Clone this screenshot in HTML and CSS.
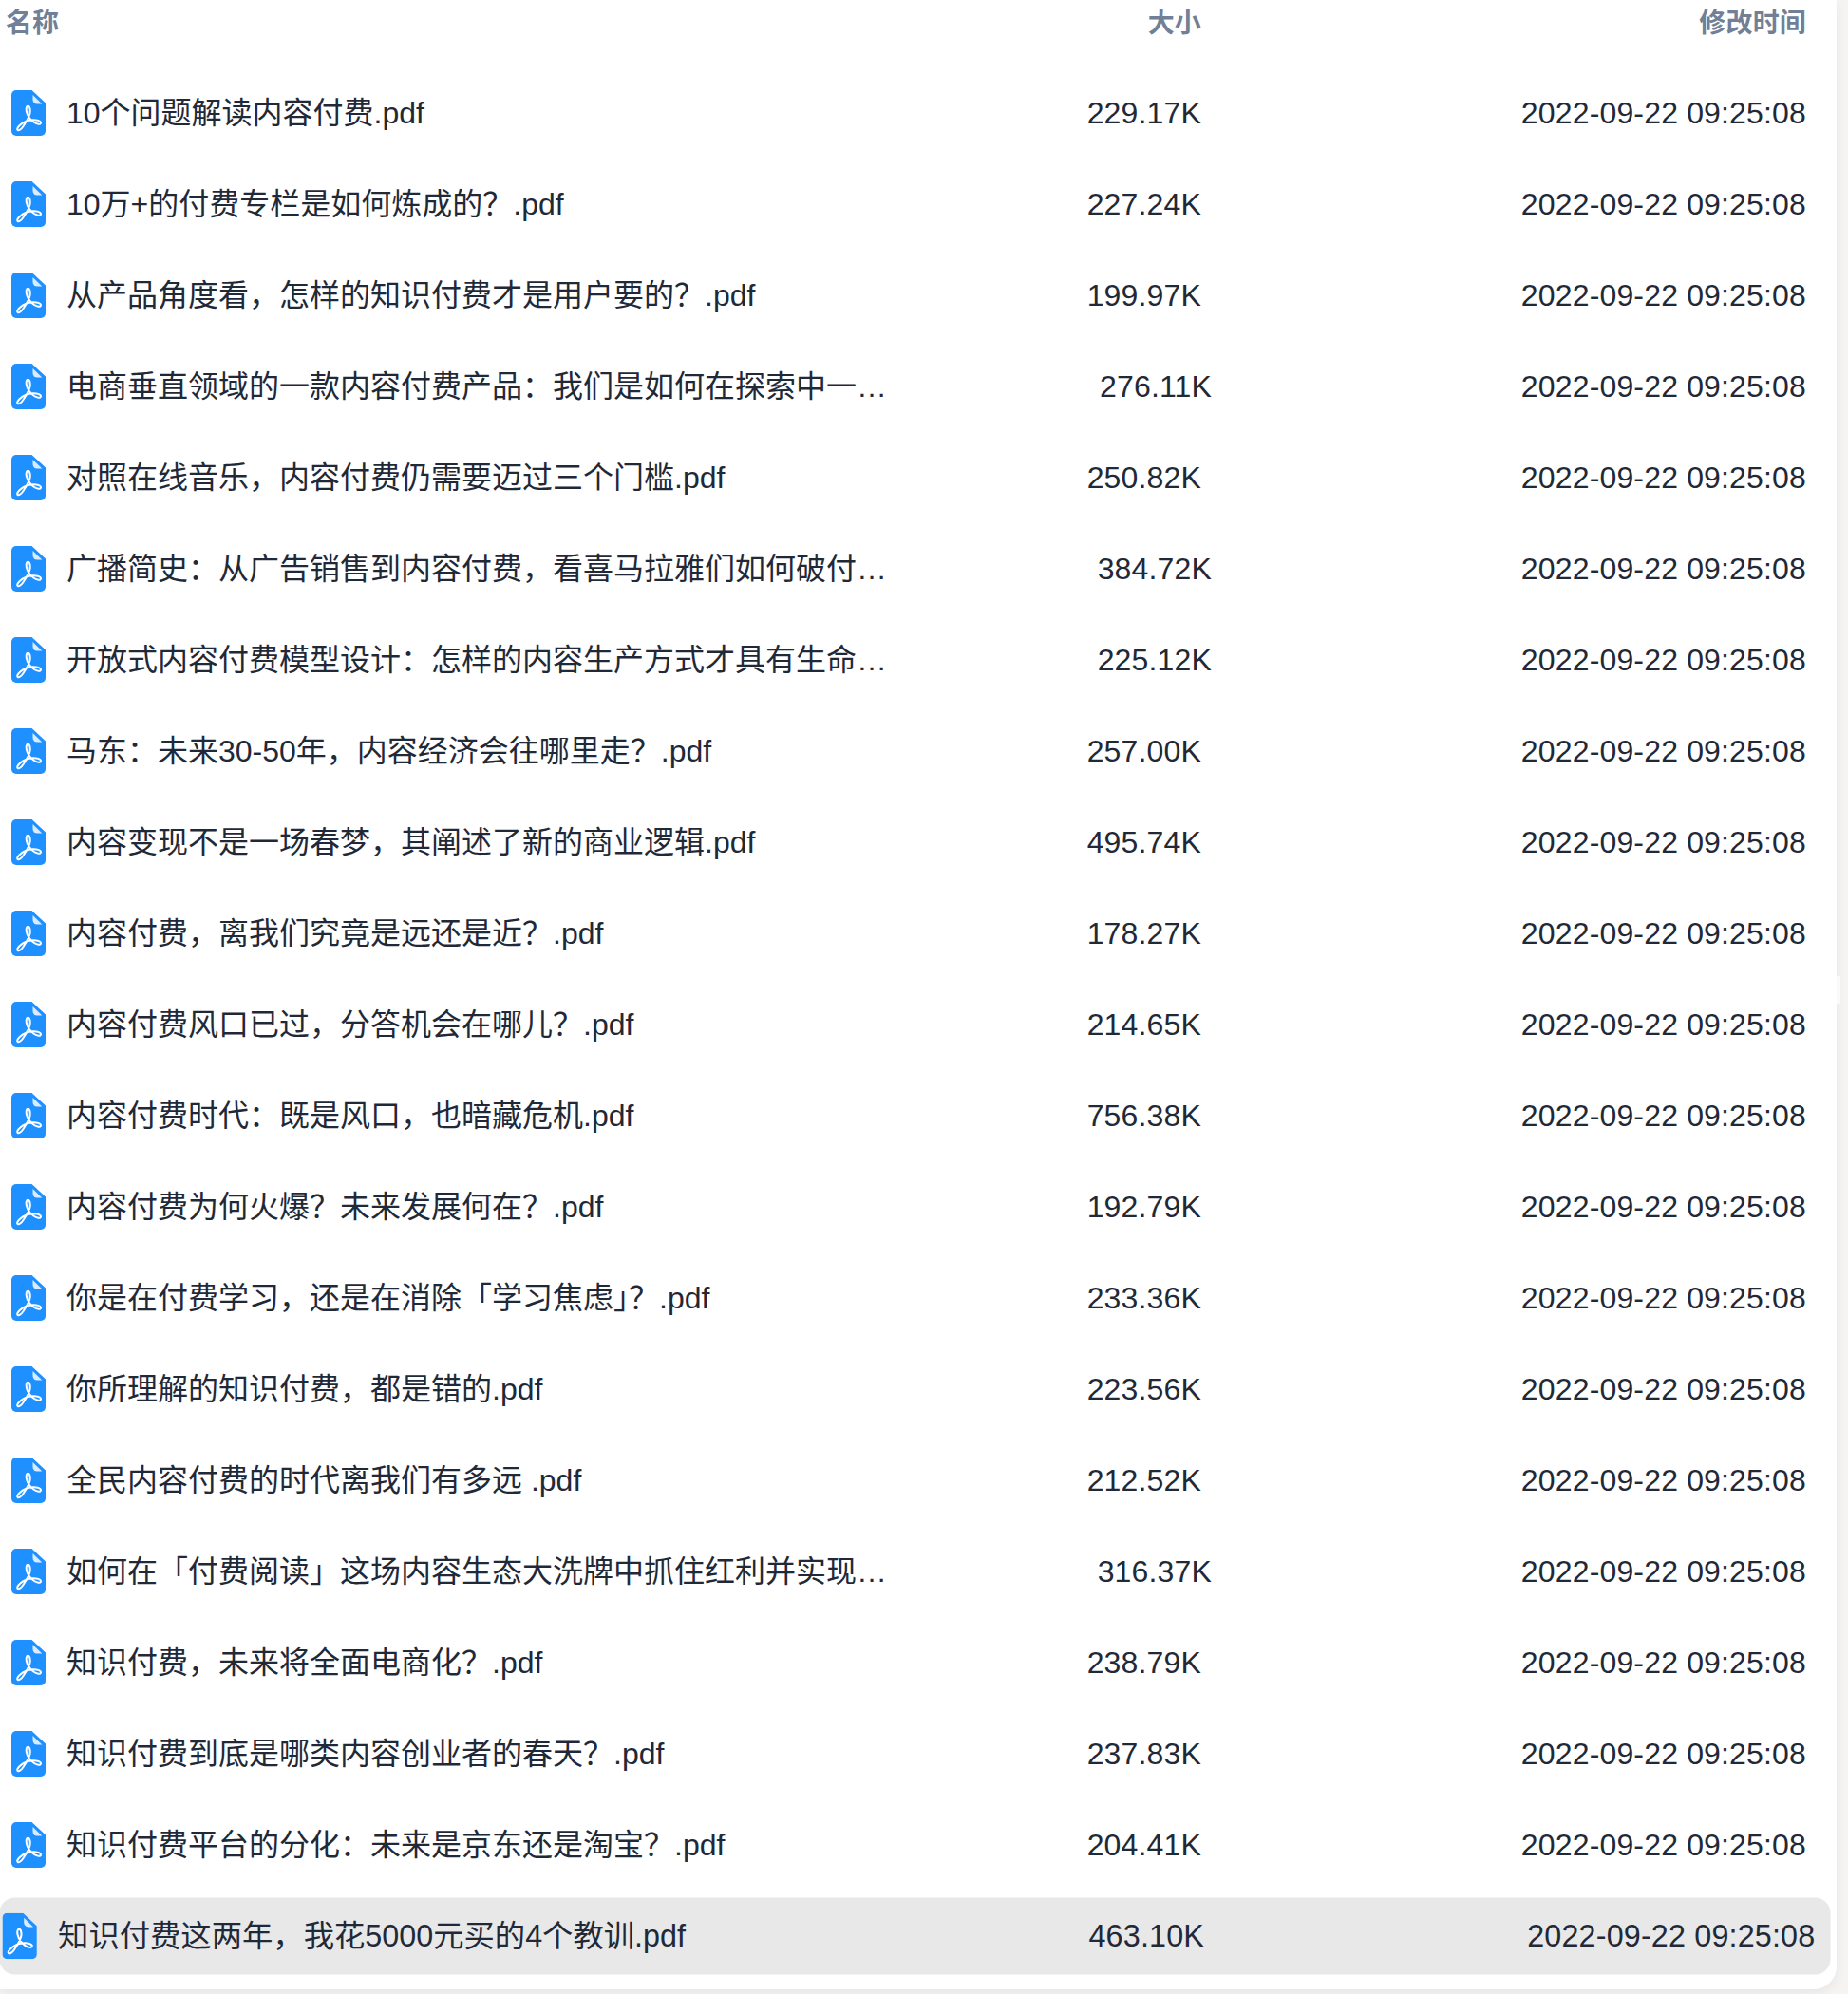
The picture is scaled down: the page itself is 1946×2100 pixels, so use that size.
FILE: index.html
```html
<!DOCTYPE html>
<html lang="zh-CN">
  <head>
    <meta charset="utf-8" />

    <title>文件列表</title>

    <link rel="stylesheet" href="styles.css">
  </head>

  <body>
    <svg class="sprites" width="0" height="0">
      <symbol id="icon-pdf" viewBox="0 0 36 48">
        <path fill="#1e90ff" d="M5 0H21.500L36 13.500V43a5 5 0 0 1-5 5H5a5 5 0 0 1-5-5V5a5 5 0 0 1 5-5Z" />
        <path fill="#d9ebff" d="M22.500 5 32.300 14.500H27a4.500 4.500 0 0 1-4.500-4.500Z" />
        <path fill="none" stroke="#fff" stroke-width="2" stroke-linejoin="round" d="M17.500 16.800C15.800 16.800 15.200 19.500 15.900 22.500 16.800 26.500 19.500 31 24 34 27 36 30.800 36.600 31 34.500 31.200 32 26.500 31 22.500 31.200 17.500 31.500 12.500 33.500 8.800 37 6.500 39.200 5.500 41 6.600 42 7.800 43 10.500 41 12.500 38 15.500 33.500 18.500 28.500 19.500 24.500 20.200 21.500 19.600 16.800 17.500 16.800Z" />
      </symbol>
    </svg>

    <div class="card">
      <div class="list-head">
        <div class="col-name">名称</div>
        <div class="col-size">大小</div>
        <div class="col-date">修改时间</div>
      </div>

      <div class="file-row">
        <svg class="file-icon"><use href="#icon-pdf"></use></svg>
        <div class="col-name">10个问题解读内容付费.pdf</div>
        <div class="col-size">229.17K</div>
        <div class="col-date">2022-09-22 09:25:08</div>
      </div>
      <div class="file-row">
        <svg class="file-icon"><use href="#icon-pdf"></use></svg>
        <div class="col-name">10万+的付费专栏是如何炼成的&#xFF1F;.pdf</div>
        <div class="col-size">227.24K</div>
        <div class="col-date">2022-09-22 09:25:08</div>
      </div>
      <div class="file-row">
        <svg class="file-icon"><use href="#icon-pdf"></use></svg>
        <div class="col-name">从产品角度看&#xFF0C;怎样的知识付费才是用户要的&#xFF1F;.pdf</div>
        <div class="col-size">199.97K</div>
        <div class="col-date">2022-09-22 09:25:08</div>
      </div>
      <div class="file-row file-row-long">
        <svg class="file-icon"><use href="#icon-pdf"></use></svg>
        <div class="col-name">电商垂直领域的一款内容付费产品&#xFF1A;我们是如何在探索中一…</div>
        <div class="col-size">276.11K</div>
        <div class="col-date">2022-09-22 09:25:08</div>
      </div>
      <div class="file-row">
        <svg class="file-icon"><use href="#icon-pdf"></use></svg>
        <div class="col-name">对照在线音乐&#xFF0C;内容付费仍需要迈过三个门槛.pdf</div>
        <div class="col-size">250.82K</div>
        <div class="col-date">2022-09-22 09:25:08</div>
      </div>
      <div class="file-row file-row-long">
        <svg class="file-icon"><use href="#icon-pdf"></use></svg>
        <div class="col-name">广播简史&#xFF1A;从广告销售到内容付费&#xFF0C;看喜马拉雅们如何破付…</div>
        <div class="col-size">384.72K</div>
        <div class="col-date">2022-09-22 09:25:08</div>
      </div>
      <div class="file-row file-row-long">
        <svg class="file-icon"><use href="#icon-pdf"></use></svg>
        <div class="col-name">开放式内容付费模型设计&#xFF1A;怎样的内容生产方式才具有生命…</div>
        <div class="col-size">225.12K</div>
        <div class="col-date">2022-09-22 09:25:08</div>
      </div>
      <div class="file-row">
        <svg class="file-icon"><use href="#icon-pdf"></use></svg>
        <div class="col-name">马东&#xFF1A;未来30-50年&#xFF0C;内容经济会往哪里走&#xFF1F;.pdf</div>
        <div class="col-size">257.00K</div>
        <div class="col-date">2022-09-22 09:25:08</div>
      </div>
      <div class="file-row">
        <svg class="file-icon"><use href="#icon-pdf"></use></svg>
        <div class="col-name">内容变现不是一场春梦&#xFF0C;其阐述了新的商业逻辑.pdf</div>
        <div class="col-size">495.74K</div>
        <div class="col-date">2022-09-22 09:25:08</div>
      </div>
      <div class="file-row">
        <svg class="file-icon"><use href="#icon-pdf"></use></svg>
        <div class="col-name">内容付费&#xFF0C;离我们究竟是远还是近&#xFF1F;.pdf</div>
        <div class="col-size">178.27K</div>
        <div class="col-date">2022-09-22 09:25:08</div>
      </div>
      <div class="file-row">
        <svg class="file-icon"><use href="#icon-pdf"></use></svg>
        <div class="col-name">内容付费风口已过&#xFF0C;分答机会在哪儿&#xFF1F;.pdf</div>
        <div class="col-size">214.65K</div>
        <div class="col-date">2022-09-22 09:25:08</div>
      </div>
      <div class="file-row">
        <svg class="file-icon"><use href="#icon-pdf"></use></svg>
        <div class="col-name">内容付费时代&#xFF1A;既是风口&#xFF0C;也暗藏危机.pdf</div>
        <div class="col-size">756.38K</div>
        <div class="col-date">2022-09-22 09:25:08</div>
      </div>
      <div class="file-row">
        <svg class="file-icon"><use href="#icon-pdf"></use></svg>
        <div class="col-name">内容付费为何火爆&#xFF1F;未来发展何在&#xFF1F;.pdf</div>
        <div class="col-size">192.79K</div>
        <div class="col-date">2022-09-22 09:25:08</div>
      </div>
      <div class="file-row">
        <svg class="file-icon"><use href="#icon-pdf"></use></svg>
        <div class="col-name">你是在付费学习&#xFF0C;还是在消除「学习焦虑<span class="half-punct">」</span>&#xFF1F;.pdf</div>
        <div class="col-size">233.36K</div>
        <div class="col-date">2022-09-22 09:25:08</div>
      </div>
      <div class="file-row">
        <svg class="file-icon"><use href="#icon-pdf"></use></svg>
        <div class="col-name">你所理解的知识付费&#xFF0C;都是错的.pdf</div>
        <div class="col-size">223.56K</div>
        <div class="col-date">2022-09-22 09:25:08</div>
      </div>
      <div class="file-row">
        <svg class="file-icon"><use href="#icon-pdf"></use></svg>
        <div class="col-name">全民内容付费的时代离我们有多远 .pdf</div>
        <div class="col-size">212.52K</div>
        <div class="col-date">2022-09-22 09:25:08</div>
      </div>
      <div class="file-row file-row-long">
        <svg class="file-icon"><use href="#icon-pdf"></use></svg>
        <div class="col-name">如何在「付费阅读」这场内容生态大洗牌中抓住红利并实现…</div>
        <div class="col-size">316.37K</div>
        <div class="col-date">2022-09-22 09:25:08</div>
      </div>
      <div class="file-row">
        <svg class="file-icon"><use href="#icon-pdf"></use></svg>
        <div class="col-name">知识付费&#xFF0C;未来将全面电商化&#xFF1F;.pdf</div>
        <div class="col-size">238.79K</div>
        <div class="col-date">2022-09-22 09:25:08</div>
      </div>
      <div class="file-row">
        <svg class="file-icon"><use href="#icon-pdf"></use></svg>
        <div class="col-name">知识付费到底是哪类内容创业者的春天&#xFF1F;.pdf</div>
        <div class="col-size">237.83K</div>
        <div class="col-date">2022-09-22 09:25:08</div>
      </div>
      <div class="file-row">
        <svg class="file-icon"><use href="#icon-pdf"></use></svg>
        <div class="col-name">知识付费平台的分化&#xFF1A;未来是京东还是淘宝&#xFF1F;.pdf</div>
        <div class="col-size">204.41K</div>
        <div class="col-date">2022-09-22 09:25:08</div>
      </div>
      <div class="file-row file-row-active">
        <svg class="file-icon"><use href="#icon-pdf"></use></svg>
        <div class="col-name">知识付费这两年&#xFF0C;我花5000元买的4个教训.pdf</div>
        <div class="col-size">463.10K</div>
        <div class="col-date">2022-09-22 09:25:08</div>
      </div>
    </div>

    <div class="scroll-thumb"></div>
  </body>
</html>
```

FILE: styles.css
```css
html,
body {
  margin: 0;
  height: 100%;
}
body {
  background-color: #f5f4f3;
  color: #1f2937;
  font-family: 'Liberation Sans', 'Noto Sans CJK SC', sans-serif;
  font-size: 32px;
  line-height: 48px;
  overflow: hidden;
}
.sprites {
  position: absolute;
}
.card {
  box-sizing: border-box;
  width: 1934px;
  height: 2095px;
  padding-right: 16px;
  background-color: white;
  border-bottom-right-radius: 24px;
  box-shadow: 0 4px 12px rgba(0, 0, 0, 0.06);
}
.list-head {
  display: flex;
  align-items: center;
  height: 50px;
  margin-bottom: 29px;
  padding: 0 16px 0 6px;
  color: #718096;
  font-size: 28px;
  font-weight: 700;
}
.file-row {
  display: flex;
  align-items: center;
  height: 80px;
  margin: 0 0 16px 9px;
  padding: 0 16px 0 3px;
  border-radius: 16px;
  white-space: nowrap;
}
.file-row-active {
  background-color: #e8e8e9;
  transform: scale(1.01);
}
.file-icon {
  flex: none;
  width: 36px;
  height: 48px;
  margin-right: 22px;
}
.col-name {
  flex: 1;
  min-width: 0;
  overflow: hidden;
}
.half-punct {
  font-feature-settings: 'halt';
}
.col-size {
  flex: none;
  width: 200px;
  letter-spacing: 0.16px;
  text-align: right;
}
.col-date {
  flex: none;
  width: 637px;
  letter-spacing: 0.16px;
  text-align: right;
}
.file-row-long .col-date {
  width: 626px;
}
.scroll-thumb {
  position: absolute;
  top: 1028px;
  left: 1934px;
  width: 4px;
  height: 29px;
  background-color: #fafafa;
}
```
